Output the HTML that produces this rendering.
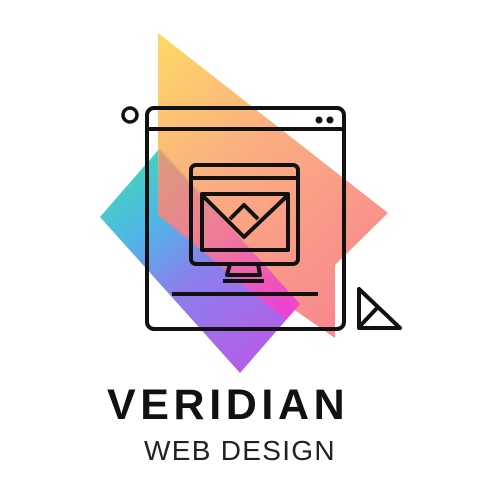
<!DOCTYPE html>
<html><head><style>
html,body{margin:0;padding:0;background:#fff;width:500px;height:500px;overflow:hidden}
.t1{position:absolute;left:107px;top:381px;font:bold 43px "Liberation Sans",sans-serif;color:#111;letter-spacing:4.6px;}
.t2{position:absolute;left:144px;top:435px;font:28px "Liberation Sans",sans-serif;color:#222;letter-spacing:1.3px;}
</style></head><body>
<svg width="500" height="500" style="position:absolute;left:0;top:0">
<defs>
<linearGradient id="g1" x1="0" y1="0" x2="0.6" y2="1">
<stop offset="0" stop-color="#fdd34a"/><stop offset="0.45" stop-color="#f9a06a"/><stop offset="1" stop-color="#f7767a"/></linearGradient>
<linearGradient id="g2" x1="0" y1="0" x2="0.7" y2="1">
<stop offset="0" stop-color="#3fe0a8"/><stop offset="0.35" stop-color="#4fb6e6"/><stop offset="0.6" stop-color="#8a80ec"/><stop offset="1" stop-color="#b45ee8"/></linearGradient>
<linearGradient id="g3" x1="0" y1="0" x2="0.8" y2="1">
<stop offset="0" stop-color="#d89a7a"/><stop offset="0.5" stop-color="#f07a9a"/><stop offset="1" stop-color="#f040d0"/></linearGradient>
</defs>
<polygon points="100,217 160,148 300,304 240,373" fill="url(#g2)"/>
<polygon points="158,33 388,213 335,265 335,338 158,215" fill="url(#g1)" opacity="0.85"/>
<polygon points="159,150 300,304 286,320 158,215" fill="url(#g3)" opacity="0.9"/>
<g fill="none" stroke="#111" stroke-width="4" stroke-linejoin="round">
<rect x="147" y="108" width="197" height="221" rx="7"/>
<line x1="147" y1="129" x2="344" y2="129"/>
<circle cx="130" cy="115" r="7" stroke-width="3.5"/>
<rect x="191" y="165" width="107" height="99" rx="5"/>
<line x1="191" y1="178" x2="298" y2="178"/>
<rect x="202" y="194" width="86" height="56"/>
<polyline points="202,195 244,237 288,195"/>
<polyline points="230,219 244,205 258,219"/>
<polygon points="230,264 258,264 260,275 227,275"/>
<line x1="223" y1="281" x2="264" y2="281"/>
<line x1="172" y1="294" x2="318" y2="294"/>
<polygon points="359,289 359,328 400,328"/>
<line x1="360" y1="326" x2="378" y2="307"/>
</g>
<circle cx="319" cy="120" r="3.5" fill="#111"/>
<circle cx="330" cy="120" r="3.5" fill="#111"/>
</svg>
<div class="t1">VERIDIAN</div>
<div class="t2">WEB DESIGN</div>
</body></html>
